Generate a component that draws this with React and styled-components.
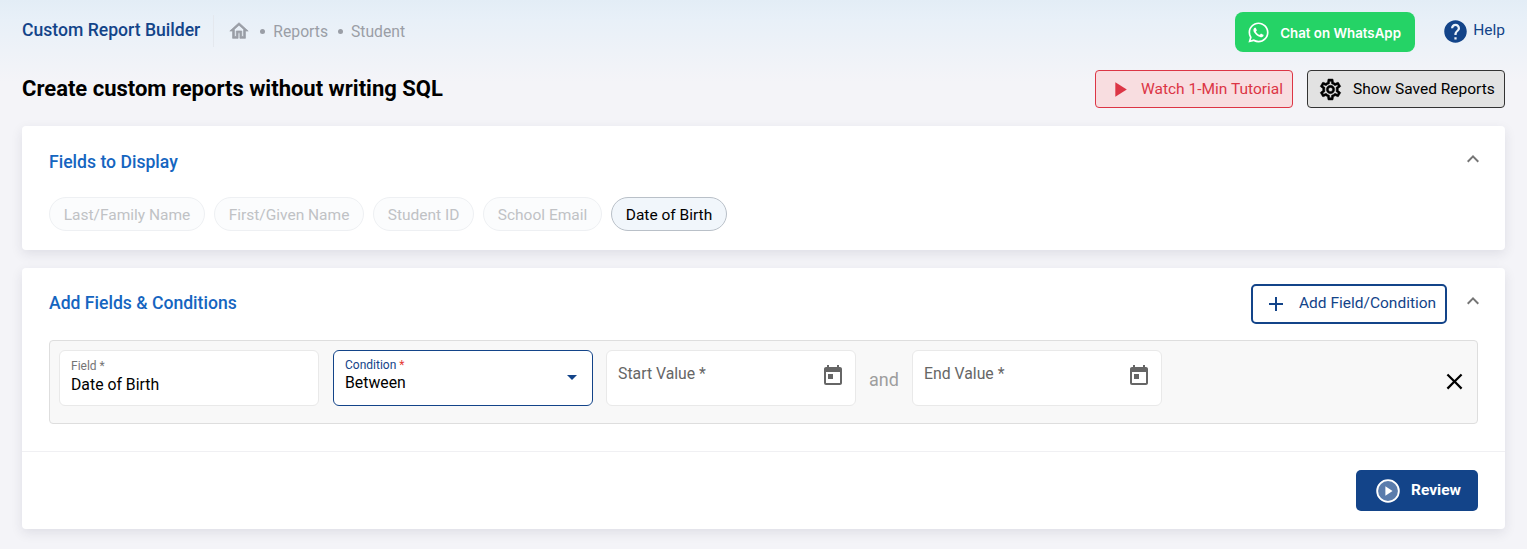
import styled, { createGlobalStyle } from "styled-components";
import { FaWhatsapp } from "react-icons/fa";
import {
  MdAdd,
  MdArrowDropDown,
  MdClose,
  MdToday,
  MdExpandLess,
  MdHelp,
  MdPlayArrow,
} from "react-icons/md";

const NAVY = "#134489";
const BLUE = "#1565c0";

const chips = [
  { label: "Last/Family Name", width: 156 },
  { label: "First/Given Name", width: 150 },
  { label: "Student ID", width: 101 },
  { label: "School Email", width: 119 },
  { label: "Date of Birth", width: 116, active: true },
];

const HomeGlyph = (props) => (
  <svg viewBox="0 0 24 24" width="22" height="22" {...props}>
    <path d="M12 5.69l5 4.5V18h-2v-6H9v6H7v-7.81l5-4.5M12 3L2 12h3v8h6v-6h2v6h6v-8h3L12 3z" />
  </svg>
);

const GearGlyph = (props) => (
  <svg viewBox="0 0 24 24" width="25" height="25" {...props}>
    <path d="M19.43 12.98c.04-.32.07-.64.07-.98 0-.34-.03-.66-.07-.98l2.11-1.65c.19-.15.24-.42.12-.64l-2-3.46c-.09-.16-.26-.25-.44-.25-.06 0-.12.01-.17.03l-2.49 1c-.52-.4-1.08-.73-1.69-.98l-.38-2.65C14.46 2.18 14.25 2 14 2h-4c-.25 0-.46.18-.49.42l-.38 2.65c-.61.25-1.17.59-1.69.98l-2.49-1c-.06-.02-.12-.03-.18-.03-.17 0-.34.09-.43.25l-2 3.46c-.13.22-.07.49.12.64l2.11 1.65c-.04.32-.07.65-.07.98 0 .33.03.66.07.98l-2.11 1.65c-.19.15-.24.42-.12.64l2 3.46c.09.16.26.25.44.25.06 0 .12-.01.17-.03l2.49-1c.52.4 1.08.73 1.69.98l.38 2.65c.03.24.24.42.49.42h4c.25 0 .46-.18.49-.42l.38-2.65c.61-.25 1.17-.59 1.69-.98l2.49 1c.06.02.12.03.18.03.17 0 .34-.09.43-.25l2-3.46c.12-.22.07-.49-.12-.64l-2.11-1.65zm-1.98-1.71c.04.31.05.52.05.73 0 .21-.02.43-.05.73l-.14 1.13.89.7 1.08.84-.7 1.21-1.27-.51-1.04-.42-.9.68c-.43.32-.84.56-1.25.73l-1.06.43-.16 1.13-.2 1.35h-1.4l-.19-1.35-.16-1.13-1.06-.43c-.43-.18-.83-.41-1.23-.71l-.91-.7-1.06.43-1.27.51-.7-1.21 1.08-.84.89-.7-.14-1.13c-.03-.31-.05-.54-.05-.74s.02-.43.05-.73l.14-1.13-.89-.7-1.08-.84.7-1.21 1.27.51 1.04.42.9-.68c.43-.32.84-.56 1.25-.73l1.06-.43.16-1.13.2-1.35h1.39l.19 1.35.16 1.13 1.06.43c.43.18.83.41 1.23.71l.91.7 1.06-.43 1.27-.51.7 1.21-1.07.85-.89.7.14 1.13zM12 8c-2.21 0-4 1.79-4 4s1.79 4 4 4 4-1.79 4-4-1.79-4-4-4zm0 6c-1.1 0-2-.9-2-2s.9-2 2-2 2 .9 2 2-.9 2-2 2z" />
  </svg>
);

export default function App() {
  return (
    <Page>
      <GlobalStyle />
      <TopBar>
        <Crumbs>
          <AppTitle>Custom Report Builder</AppTitle>
          <Divider />
          <HomeIcon />
          <Dot />
          <Crumb>Reports</Crumb>
          <Dot />
          <Crumb>Student</Crumb>
        </Crumbs>
        <TopActions>
          <WhatsAppButton>
            <FaWhatsapp />
            Chat on WhatsApp
          </WhatsAppButton>
          <HelpLink>
            <MdHelp />
            <span>Help</span>
          </HelpLink>
        </TopActions>
      </TopBar>

      <TitleRow>
        <PageTitle>Create custom reports without writing SQL</PageTitle>
        <TitleActions>
          <TutorialButton>
            <MdPlayArrow />
            Watch 1-Min Tutorial
          </TutorialButton>
          <SavedButton>
            <GearIcon />
            Show Saved Reports
          </SavedButton>
        </TitleActions>
      </TitleRow>

      <FieldsCard>
        <CardHeader>
          <CardTitle>Fields to Display</CardTitle>
          <Collapse />
        </CardHeader>
        <ChipRow>
          {chips.map((chip) => (
            <Chip key={chip.label} $active={chip.active} $width={chip.width}>
              {chip.label}
            </Chip>
          ))}
        </ChipRow>
      </FieldsCard>

      <ConditionsCard>
        <ConditionsBody>
          <ConditionsHeader>
            <ConditionsTitle>Add Fields &amp; Conditions</ConditionsTitle>
            <HeaderActions>
              <AddButton>
                <MdAdd />
                Add Field/Condition
              </AddButton>
              <Collapse />
            </HeaderActions>
          </ConditionsHeader>
          <ConditionRow>
            <FilledField>
              <SmallLabel>Field *</SmallLabel>
              <FieldValue $gap={2}>Date of Birth</FieldValue>
            </FilledField>
            <SelectField>
              <SelectText>
                <SmallLabel $focused>
                  Condition <Required>*</Required>
                </SmallLabel>
                <FieldValue $gap={1}>Between</FieldValue>
              </SelectText>
              <SelectArrow />
            </SelectField>
            <DateField $marginLeft={13}>
              <Placeholder>Start Value *</Placeholder>
              <CalendarIcon />
            </DateField>
            <AndText>and</AndText>
            <DateField>
              <Placeholder>End Value *</Placeholder>
              <CalendarIcon />
            </DateField>
            <RemoveIcon />
          </ConditionRow>
        </ConditionsBody>
        <CardFooter>
          <ReviewButton>
            <svg width="26" height="26" viewBox="0 0 24 24">
              <circle cx="12" cy="12" r="10" fill="#fff" fillOpacity="0.3" stroke="#fff" strokeWidth="1.7" />
              <path d="M9.6 7.6v8.8l6.6-4.4z" fill="#fff" />
            </svg>
            Review
          </ReviewButton>
        </CardFooter>
      </ConditionsCard>
    </Page>
  );
}

const GlobalStyle = createGlobalStyle`
  html, body {
    margin: 0;
    padding: 0;
    background: #f4f4f8;
  }
  * {
    box-sizing: border-box;
  }
  body {
    font-family: Roboto, "Liberation Sans", sans-serif;
  }
`;

const Page = styled.div`
  height: 549px;
  padding: 12px 22px 0;
  overflow: hidden;
  background: linear-gradient(180deg, #e3edf6 0, #e8f0f8 20px, #f4f4f8 82px);
`;

const TopBar = styled.div`
  display: flex;
  justify-content: space-between;
  align-items: flex-start;
  height: 40px;
`;

const Crumbs = styled.div`
  display: flex;
  align-items: center;
  height: 38px;
`;

const AppTitle = styled.div`
  margin-top: -2px;
  font-size: 17.6px;
  font-weight: 500;
  color: ${NAVY};
`;

const Divider = styled.div`
  width: 1px;
  height: 32px;
  margin: 0 14px 0 13px;
  background: #e4e8ee;
`;

const HomeIcon = styled(HomeGlyph)`
  fill: #9a9ea6;
  stroke: #9a9ea6;
  stroke-width: 0.8;
`;

const Dot = styled.span`
  width: 5px;
  height: 5px;
  margin: 0 9px 0 10px;
  border-radius: 50%;
  background: #9a9ea6;
`;

const Crumb = styled.span`
  margin-left: -1px;
  font-size: 15.7px;
  color: #9a9ea6;
`;

const TopActions = styled.div`
  display: flex;
  align-items: flex-start;
`;

const WhatsAppButton = styled.button`
  display: flex;
  align-items: center;
  gap: 10px;
  width: 180px;
  height: 40px;
  padding: 1px 0 0 12px;
  border: none;
  border-radius: 8px;
  background: #25d366;
  color: #fff;
  font-family: Inter, sans-serif;
  font-size: 13.3px;
  font-weight: 600;

  svg {
    font-size: 23px;
    margin-top: -1px;
  }
`;

const HelpLink = styled.a`
  display: flex;
  align-items: flex-start;
  gap: 4px;
  margin-left: 27px;
  color: ${NAVY};
  font-size: 15.5px;

  svg {
    font-size: 27px;
    margin-top: 6px;
  }

  span {
    margin-top: 9px;
  }
`;

const TitleRow = styled.div`
  display: flex;
  justify-content: space-between;
  align-items: center;
  height: 38px;
  margin-top: 18px;
`;

const PageTitle = styled.h1`
  margin: -2px 0 0;
  font-size: 22px;
  font-weight: 700;
  color: #000;
`;

const TitleActions = styled.div`
  display: flex;
  gap: 14px;
`;

const OutlineAction = styled.button`
  display: flex;
  align-items: center;
  height: 38px;
  border-radius: 4px;
  font-family: inherit;
  font-size: 15.5px;
  padding-bottom: 2px;
`;

const TutorialButton = styled(OutlineAction)`
  gap: 9px;
  width: 198px;
  padding-left: 11px;
  border: 1px solid #dc3545;
  background: #f8dde0;
  color: #dc3545;

  svg {
    font-size: 25px;
    margin-top: 2px;
  }
`;

const SavedButton = styled(OutlineAction)`
  gap: 10px;
  width: 198px;
  padding-left: 10px;
  border: 1px solid #333;
  background: #e2e2e2;
  color: #000;
`;

const GearIcon = styled(GearGlyph)`
  margin-top: 2px;
  fill: #000;
  stroke: #000;
  stroke-width: 0.5;
`;

const Card = styled.section`
  background: #fff;
  border-radius: 4px;
  box-shadow: 0 4px 12px rgba(40, 40, 70, 0.1);
`;

const FieldsCard = styled(Card)`
  height: 124px;
  margin-top: 18px;
  padding: 0 20px 0 27px;
`;

const CardHeader = styled.div`
  display: flex;
  justify-content: space-between;
  align-items: center;
  height: 71px;
`;

const CardTitle = styled.h2`
  margin: 0;
  font-size: 17.6px;
  font-weight: 500;
  color: ${BLUE};
`;

const ConditionsTitle = styled(CardTitle)`
  margin-top: -3px;
`;

const Collapse = styled(MdExpandLess)`
  font-size: 24px;
  color: #757575;
  margin-top: -6px;
`;

const ChipRow = styled.div`
  display: flex;
  gap: 9px;
`;

const Chip = styled.div`
  display: flex;
  justify-content: center;
  align-items: center;
  width: ${({ $width }) => $width}px;
  height: 34px;
  padding-top: 1px;
  border-radius: 17px;
  font-size: 15.5px;
  border: 1px solid ${({ $active }) => ($active ? "#b9c0c8" : "#eef0f3")};
  background: ${({ $active }) => ($active ? "#f1f6fb" : "#fbfcfd")};
  color: ${({ $active }) => ($active ? "#000" : "#c0c2c5")};
`;

const ConditionsCard = styled(Card)`
  height: 261px;
  margin-top: 18px;
`;

const ConditionsBody = styled.div`
  height: 184px;
  padding: 0 27px;
  border-bottom: 1px solid #f0f0f3;
`;

const ConditionsHeader = styled.div`
  display: flex;
  justify-content: space-between;
  align-items: center;
  height: 72px;
`;

const HeaderActions = styled.div`
  display: flex;
  align-items: center;
  gap: 14px;
  margin-right: -7px;
`;

const AddButton = styled.button`
  display: flex;
  align-items: center;
  gap: 11px;
  width: 196px;
  height: 40px;
  padding: 0 0 2px 11px;
  border: 2px solid ${NAVY};
  border-radius: 5px;
  background: #fff;
  color: ${NAVY};
  font-family: inherit;
  font-size: 15.5px;

  svg {
    font-size: 24px;
    margin-top: 2px;
  }
`;

const ConditionRow = styled.div`
  display: flex;
  align-items: flex-start;
  height: 84px;
  padding: 9px 9px 0 9px;
  border: 1px solid #dedede;
  border-radius: 4px;
  background: #f8f8f8;
`;

const FieldBox = styled.div`
  height: 56px;
  border: 1px solid #e9e9e9;
  border-radius: 6px;
  background: #fff;
`;

const FilledField = styled(FieldBox)`
  width: 260px;
  padding: 8px 11px 0;
`;

const SelectField = styled(FieldBox)`
  display: flex;
  justify-content: space-between;
  align-items: center;
  width: 260px;
  margin-left: 14px;
  padding: 0 8px 0 11px;
  border-color: ${NAVY};
`;

const SelectText = styled.div`
  margin-top: -5px;
`;

const SmallLabel = styled.div`
  font-size: 12px;
  line-height: 14px;
  color: ${({ $focused }) => ($focused ? NAVY : "#757575")};
`;

const Required = styled.span`
  color: #e53935;
`;

const FieldValue = styled.div`
  margin-top: ${({ $gap }) => $gap}px;
  font-size: 15.8px;
  line-height: 20px;
  color: #000;
`;

const SelectArrow = styled(MdArrowDropDown)`
  font-size: 24px;
  color: ${NAVY};
  margin-top: -2px;
`;

const DateField = styled(FieldBox)`
  display: flex;
  justify-content: space-between;
  align-items: center;
  width: 250px;
  margin-left: ${({ $marginLeft }) => $marginLeft || 0}px;
  padding: 0 10px 10px 11px;
`;

const Placeholder = styled.span`
  font-size: 15.8px;
  color: #666;
`;

const CalendarIcon = styled(MdToday)`
  font-size: 24px;
  color: #666;
  margin-top: 6px;
`;

const AndText = styled.span`
  width: 56px;
  margin-top: 19px;
  text-align: center;
  font-size: 18px;
  color: #9e9e9e;
`;

const RemoveIcon = styled(MdClose)`
  margin: 18px 0 0 auto;
  font-size: 27px;
  color: #000;
`;

const CardFooter = styled.div`
  display: flex;
  justify-content: flex-end;
  padding: 18px 27px 0;
`;

const ReviewButton = styled.button`
  display: flex;
  align-items: center;
  gap: 10px;
  width: 122px;
  height: 41px;
  padding: 0 0 2px 19px;
  border: none;
  border-radius: 5px;
  background: ${NAVY};
  color: #fff;
  font-family: inherit;
  font-size: 15.5px;
  font-weight: 700;

  svg {
    margin-top: 2px;
  }
`;
